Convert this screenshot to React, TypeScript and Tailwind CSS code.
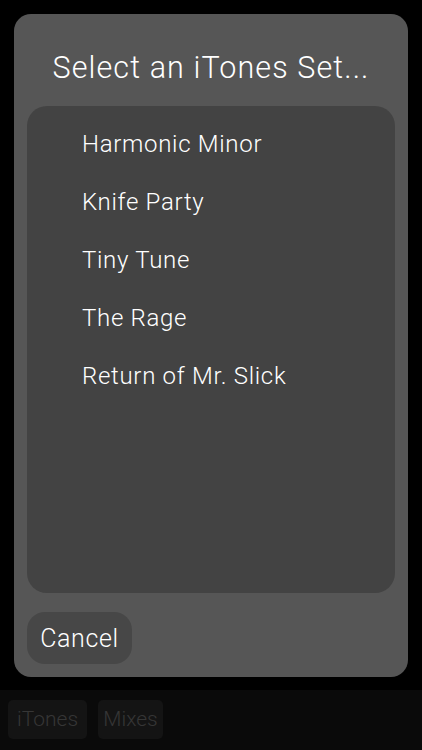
export default function App() {
  const sets = ['Harmonic Minor', 'Knife Party', 'Tiny Tune', 'The Rage', 'Return of Mr. Slick'];

  return (
    <div
      className="w-[422px] h-[750px] bg-black flex flex-col overflow-hidden"
      style={{ fontFamily: '"Helvetica Neue", Roboto, "Liberation Sans", sans-serif' }}
    >
      {/* Picker sheet */}
      <div className="px-[14px] pt-[14px] h-[690px]">
        <div className="h-[663px] bg-[#565656] rounded-[17px] flex flex-col px-[13px]">
          <h1 className="text-[30.5px] font-light text-white text-center leading-none pt-[39px] h-[92px] tracking-[1.1px]">
            Select an iTones Set...
          </h1>

          <div className="h-[487px] bg-[#434343] rounded-[20px] pt-[9px]">
            {sets.map((name) => (
              <div
                key={name}
                className="h-[58px] pl-[55px] flex items-center text-[24px] font-light text-white leading-none tracking-[0.7px]"
              >
                {name}
              </div>
            ))}
          </div>

          <div className="pt-[19px]">
            <button className="h-[52px] w-[105px] bg-[#474747] rounded-[18px] text-[25px] font-light text-white leading-none tracking-[0.6px]">
              Cancel
            </button>
          </div>
        </div>
      </div>

      {/* Bottom tabs */}
      <div className="flex-1 bg-[#0a0a0a] flex gap-[11px] px-[8px] pt-[10px]">
        <div className="w-[79px] h-[39px] bg-[#141414] rounded-[5px] flex items-center justify-center text-[21px] font-light text-[#363636]">
          iTones
        </div>
        <div className="w-[65px] h-[39px] bg-[#141414] rounded-[5px] flex items-center justify-center text-[21px] font-light text-[#363636]">
          Mixes
        </div>
      </div>
    </div>
  );
}
